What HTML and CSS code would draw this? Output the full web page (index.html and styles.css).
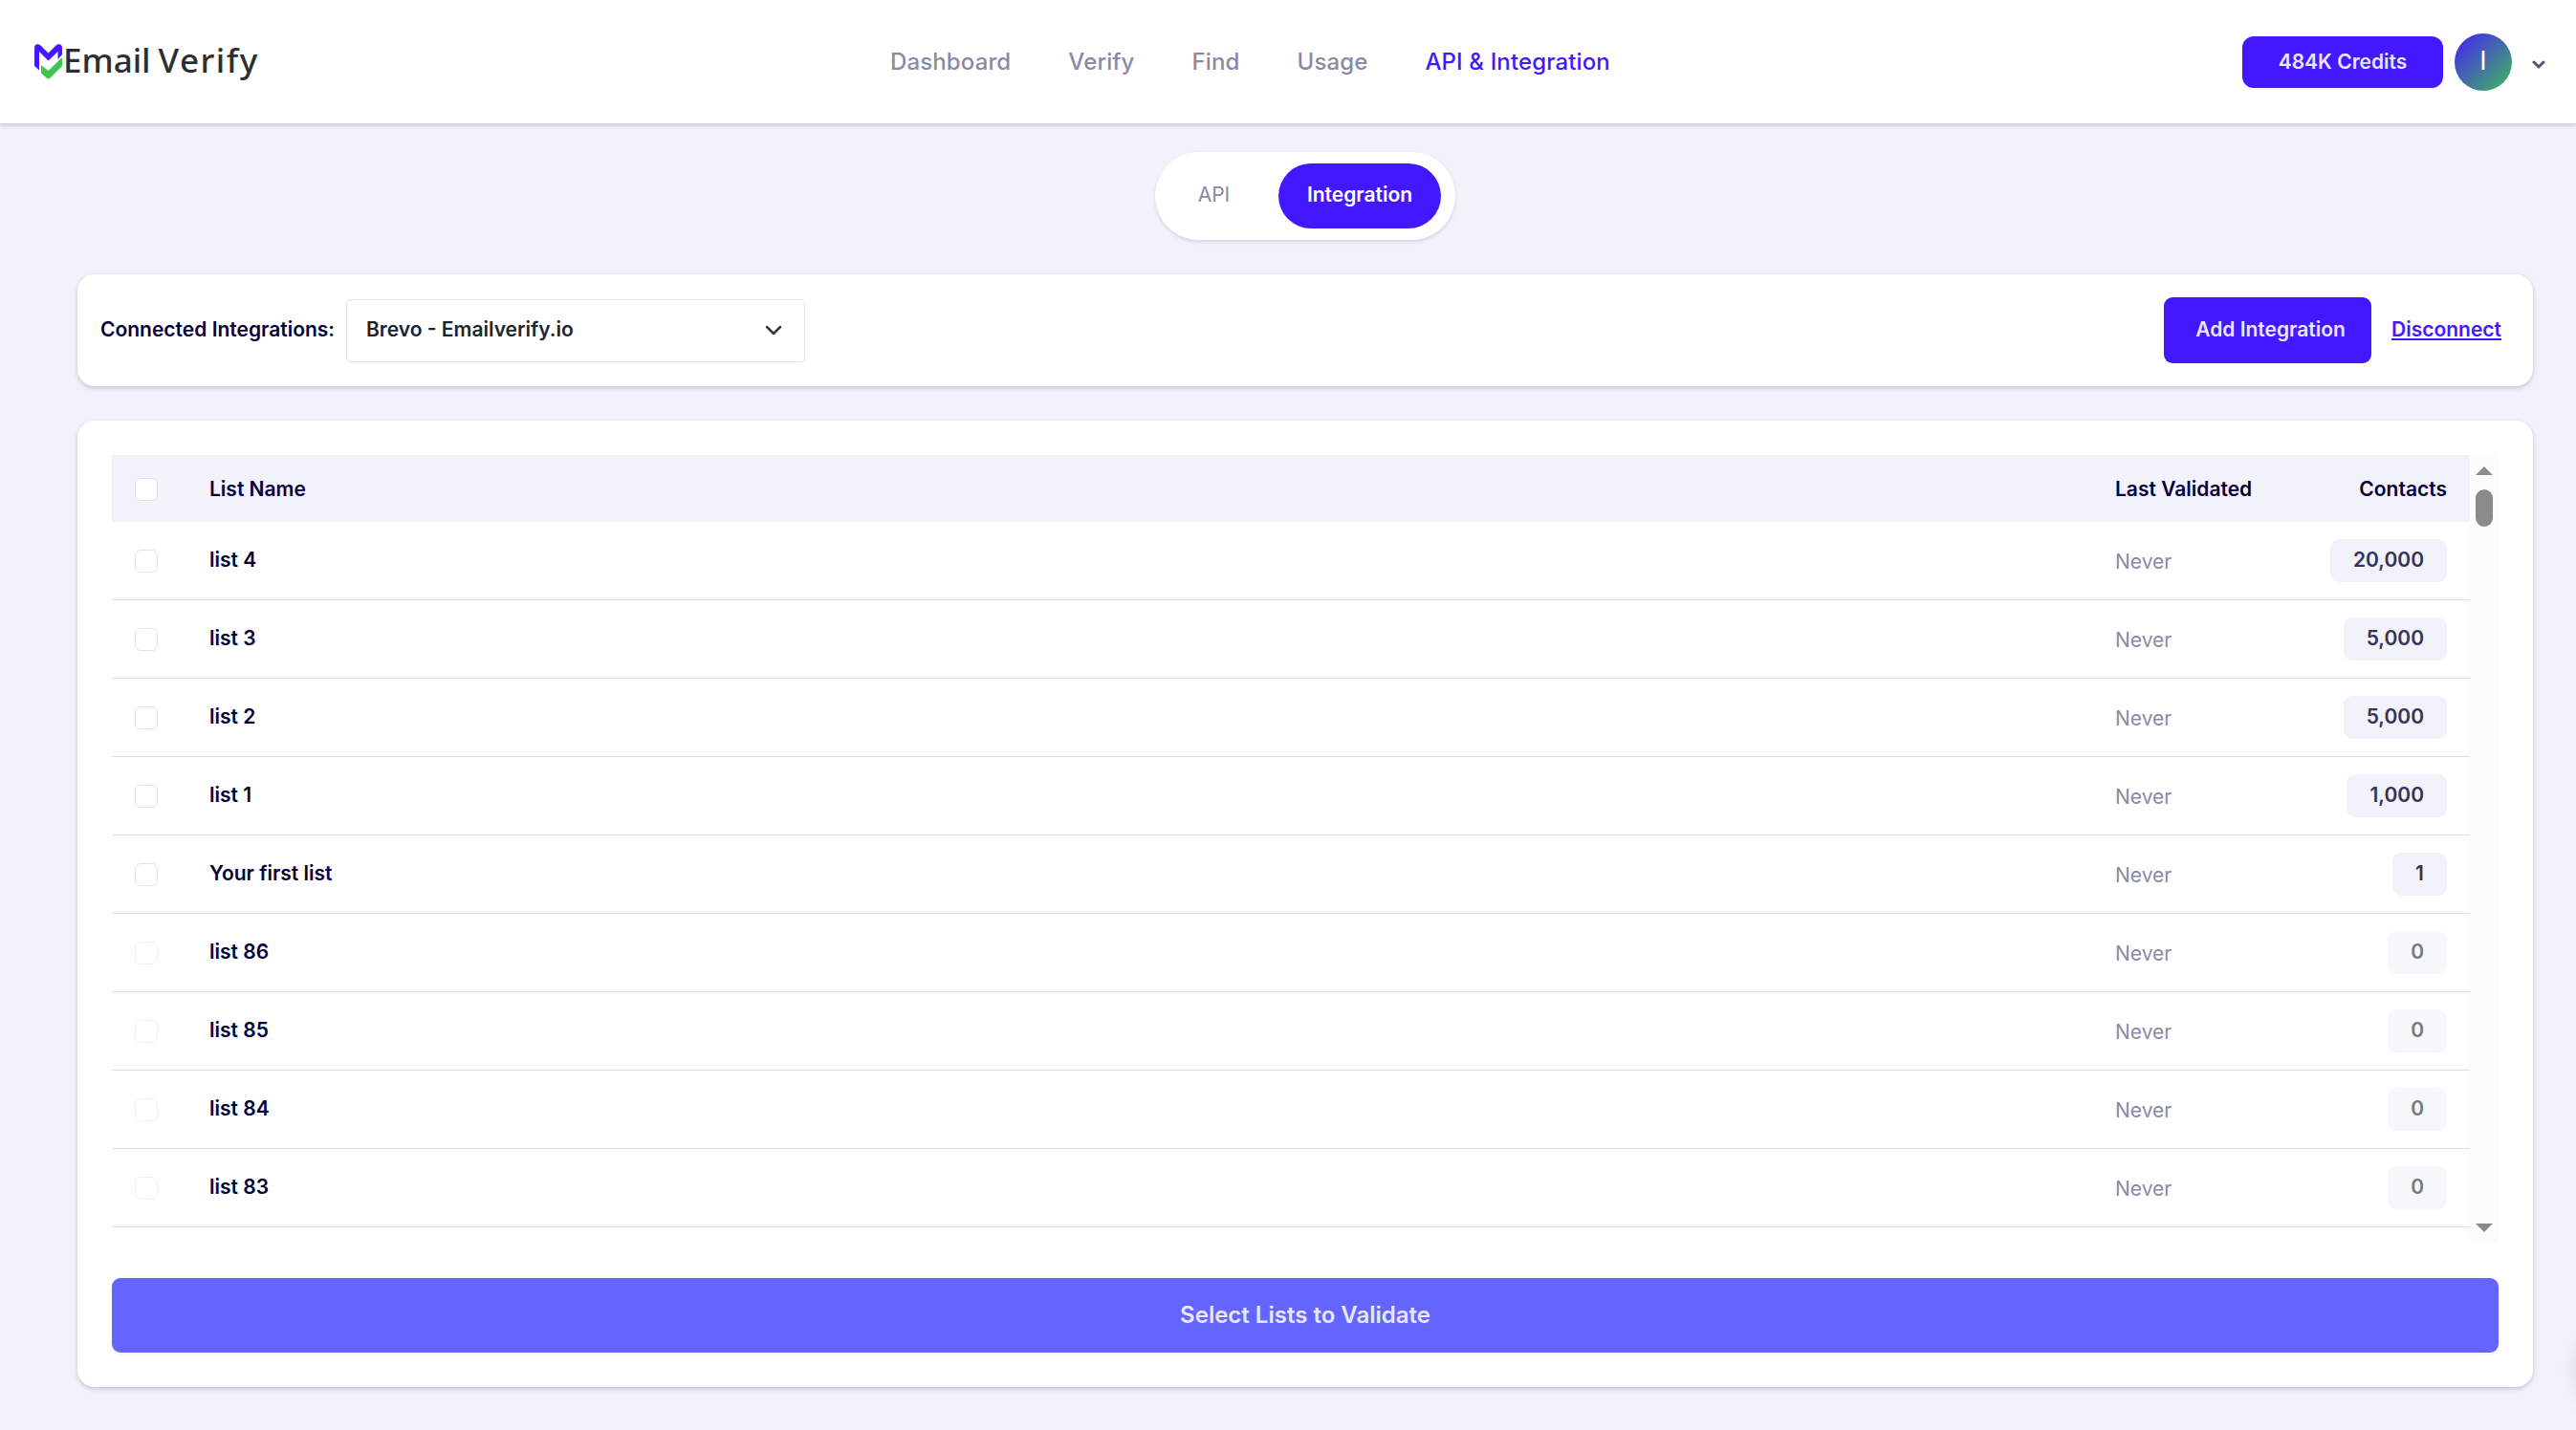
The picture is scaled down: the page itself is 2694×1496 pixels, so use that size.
FILE: index.html
```html
<!DOCTYPE html>
<html lang="en">
<head>
<meta charset="utf-8">
<title>Email Verify - Integration</title>
<link rel="stylesheet" href="styles.css">
</head>
<body>
<header class="topbar">
  <div class="logo">
    <svg class="logo-mark" viewBox="0 0 29 37" width="29" height="37">
      <path fill="#4318ff" d="M0 4C0 0 4-1 7 2L14.500 9.500L22 2C25-1 29 0 29 4V11L24.500 16V8L14.500 17.500L5 8V27.500L0 23Z"/>
      <path fill="#3fc351" d="M7 22L14.500 28L29 14V23L16.500 35.500Q14.500 37.500 12.500 35.500L7 30.500Z"/>
    </svg>
    <span class="logo-email">Email</span><span class="logo-verify">Verify</span>
  </div>
  <nav class="nav">
    <a>Dashboard</a><a>Verify</a><a>Find</a><a>Usage</a><a class="active">API &amp; Integration</a>
  </nav>
  <div class="account">
    <button class="credits">484K Credits</button>
    <span class="avatar">I</span>
    <svg class="account-caret" viewBox="0 0 14 10" width="14" height="10"><path d="M2 2L7 7L12 2" fill="none" stroke="#54547a" stroke-width="3" stroke-linecap="round" stroke-linejoin="round"/></svg>
  </div>
</header>
<main class="page">
  <div class="tabs"><span class="tab">API</span><span class="tab selected">Integration</span></div>
  <section class="card connection">
    <label class="connection-label">Connected Integrations:</label>
    <div class="select"><span>Brevo - Emailverify.io</span>
      <svg viewBox="0 0 18 12" width="18" height="12"><path d="M2 2L9 9L16 2" fill="none" stroke="#343a40" stroke-width="2.500" stroke-linecap="round" stroke-linejoin="round"/></svg>
    </div>
    <button class="add">Add Integration</button>
    <a class="disconnect">Disconnect</a>
  </section>
  <section class="card lists">
    <div class="scroller">
      <div class="table">
        <div class="row head"><i class="check"></i><span class="name">List Name</span><span class="validated">Last Validated</span><span class="contacts">Contacts</span></div>
        <div class="row"><i class="check"></i><span class="name">list 4</span><span class="validated">Never</span><span class="contacts"><b class="count">20,000</b></span></div>
        <div class="row"><i class="check"></i><span class="name">list 3</span><span class="validated">Never</span><span class="contacts"><b class="count">5,000</b></span></div>
        <div class="row"><i class="check"></i><span class="name">list 2</span><span class="validated">Never</span><span class="contacts"><b class="count">5,000</b></span></div>
        <div class="row"><i class="check"></i><span class="name">list 1</span><span class="validated">Never</span><span class="contacts"><b class="count">1,000</b></span></div>
        <div class="row"><i class="check"></i><span class="name">Your first list</span><span class="validated">Never</span><span class="contacts"><b class="count">1</b></span></div>
        <div class="row empty"><i class="check"></i><span class="name">list 86</span><span class="validated">Never</span><span class="contacts"><b class="count">0</b></span></div>
        <div class="row empty"><i class="check"></i><span class="name">list 85</span><span class="validated">Never</span><span class="contacts"><b class="count">0</b></span></div>
        <div class="row empty"><i class="check"></i><span class="name">list 84</span><span class="validated">Never</span><span class="contacts"><b class="count">0</b></span></div>
        <div class="row empty"><i class="check"></i><span class="name">list 83</span><span class="validated">Never</span><span class="contacts"><b class="count">0</b></span></div>
      </div>
      <div class="scrollbar">
        <svg viewBox="0 0 18 9" width="18" height="9"><path d="M9 0L18 9H0Z" fill="#8b8b8b"/></svg>
        <span class="thumb"></span>
        <svg class="down" viewBox="0 0 18 9" width="18" height="9"><path d="M0 0H18L9 9Z" fill="#8b8b8b"/></svg>
      </div>
    </div>
    <button class="validate">Select Lists to Validate</button>
  </section>
</main>
<div class="chat-launcher"></div>
</body>
</html>
```
FILE: styles.css
```css
* { box-sizing: border-box; }
body {
  margin: 0;
  height: 1496px;
  overflow: hidden;
  position: relative;
  background: #f2f2fb;
  font-family: Inter, "Liberation Sans", sans-serif;
  font-size: 21px;
  font-weight: 600;
  color: #050038;
}
button { font: inherit; border: 0; padding: 0; color: #e6e6ff; }

.topbar {
  height: 129px;
  background: #fff;
  box-shadow: 0 2px 5px rgba(5, 0, 56, .2);
  display: grid;
  grid-template-columns: 931px 1fr auto;
  align-items: center;
  padding-right: 32px;
}
.logo {
  display: flex;
  align-items: center;
  padding-left: 36px;
  font-family: "Noto Sans", sans-serif;
  font-size: 35px;
  font-weight: 500;
  line-height: 48px;
  color: #2b2f33;
}
.logo-email { margin: -4px 0 0 1px; }
.logo-verify { margin: -4px 0 0 8px; letter-spacing: 1.5px; }
.nav {
  display: flex;
  gap: 60px;
  font-size: 24px;
  font-weight: 500;
  line-height: 36px;
  letter-spacing: .13px;
  color: #8a8aa3;
}
.nav .active { color: #4318ff; }
.account { display: flex; align-items: center; padding-top: 1px; }
.credits {
  width: 210px;
  height: 54px;
  padding-bottom: 2px;
  border-radius: 12px;
  background: #4318ff;
  box-shadow: 0 1px 3px rgba(5, 0, 56, .08);
}
.avatar {
  width: 60px;
  height: 60px;
  margin-left: 12px;
  border-radius: 50%;
  background: linear-gradient(135deg, #4318ff -5%, #3fc351 105%);
  color: #fff;
  font-size: 27px;
  font-weight: 400;
  line-height: 58px;
  text-align: center;
}
.account-caret { margin: 5px 0 0 21px; }

.page { padding: 30px 45px 0 81px; }
.tabs {
  display: flex;
  width: 314px;
  height: 92px;
  margin: 0 auto 36px;
  padding: 12px 15px;
  border-radius: 46px;
  background: #fff;
  box-shadow: 0 2px 4px rgba(5, 0, 56, .12);
  line-height: 66px;
  text-align: center;
}
.tab { width: 114px; padding-right: 21px; font-weight: 400; color: #8a8aa3; }
.tab.selected {
  width: 170px;
  padding: 0;
  border-radius: 34px;
  background: #4318ff;
  color: #fff;
  font-weight: 600;
}
.card {
  border-radius: 18px;
  background: #fff;
  box-shadow: 0 2px 5px rgba(5, 0, 56, .2);
}
.connection {
  height: 117px;
  display: flex;
  align-items: center;
  padding: 0 33px 0 24px;
}
.connection-label { width: 257px; padding-bottom: 3px; white-space: nowrap; }
.select {
  width: 480px;
  height: 66px;
  padding: 0 23px 3px 20px;
  display: flex;
  align-items: center;
  justify-content: space-between;
  border: 1px solid #dee2e6;
  border-radius: 5px;
  color: #212529;
}
.select svg { margin-top: 4px; }
.add {
  width: 217px;
  height: 69px;
  margin-left: auto;
  padding: 0 0 3px 6px;
  border-radius: 9px;
  background: #4318ff;
}
.disconnect {
  margin-left: 21px;
  padding-bottom: 3px;
  color: #4318ff;
  text-decoration: underline;
}

.lists { margin-top: 36px; height: 1011px; padding: 36px; }
.scroller { display: flex; height: 825px; }
.table { flex: 1; }
.row {
  display: grid;
  grid-template-columns: 78px 1fr 214px 133px;
  align-items: center;
  height: 82px;
  padding: 0 24px;
  border-bottom: 1px solid #dfdfe3;
}
.row.head { height: 70px; border: 0; background: #f2f2fb; }
.check {
  width: 24px;
  height: 24px;
  margin-top: 1px;
  border: 1px solid #dee2e6;
  border-radius: 6px;
  background: #fff;
}
.empty .check { opacity: .5; }
.name { padding-bottom: 3px; }
.validated { padding-top: 2px; font-weight: 400; color: #8a8aa3; }
.contacts { display: flex; justify-content: flex-end; }
.head .name { padding-bottom: 0; }
.head .validated, .head .contacts { padding: 0; font-weight: 600; color: #050038; }
.count {
  height: 45px;
  padding: 0 24px;
  border-radius: 9px;
  background: #f2f2fb;
  color: #34345c;
  font-weight: 600;
  line-height: 43px;
}
.empty .count { background: #f6f7fb; color: #757b83; }
.scrollbar {
  width: 30px;
  display: flex;
  flex-direction: column;
  align-items: center;
  padding: 12px 0;
  background: #fcfcfc;
}
.thumb { width: 18px; height: 39px; margin-top: 15px; border-radius: 9px; background: #8b8b8b; }
.down { margin-top: auto; }
.validate {
  width: 100%;
  height: 78px;
  margin-top: 36px;
  padding-bottom: 2px;
  border-radius: 9px;
  background: #6464ff;
  box-shadow: 0 2px 4px rgba(5, 0, 56, .05);
  font-size: 24px;
}
.chat-launcher {
  position: absolute;
  left: 2696px;
  top: 1388px;
  width: 90px;
  height: 90px;
  border-radius: 50%;
  box-shadow: 0 0 20px rgba(5, 0, 56, .14);
}
```
